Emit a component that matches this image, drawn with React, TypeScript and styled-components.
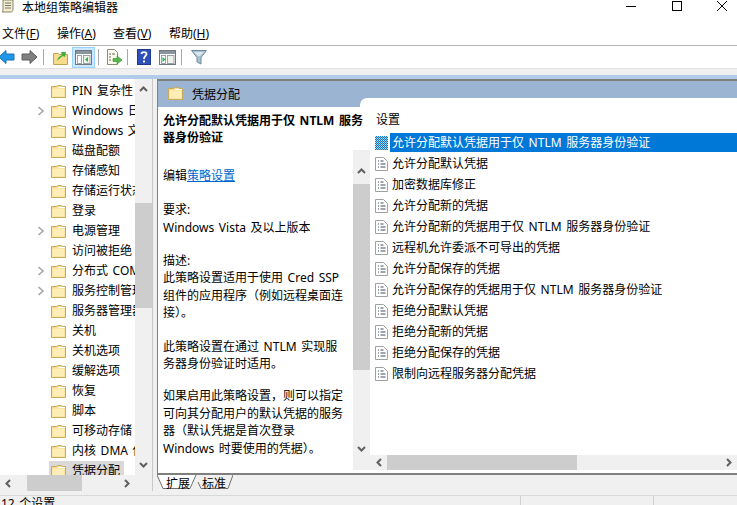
import React from 'react';
import styled, { createGlobalStyle } from 'styled-components';

const Global = createGlobalStyle`
  html, body { margin: 0; padding: 0; background: #fff; overflow: hidden; }
  body { font-family: "Noto Sans", "Noto Sans CJK SC", "Liberation Sans", sans-serif; font-size: 12px; color: #000; word-spacing: 1.5px; }
`;

const Window = styled.div`
  width: 737px; height: 505px; display: flex; flex-direction: column; overflow: hidden; background: #fff;
`;
const TitleBar = styled.div`
  height: 23px; flex: none; display: flex; align-items: flex-start;
`;
const TitleIcon = styled.svg`
  width: 16px; height: 14px; flex: none;
`;
const TitleText = styled.div`
  margin-left: 6px; line-height: 15px; white-space: nowrap; flex: 1;
`;
const WinControls = styled.div`
  display: flex; width: 103px; margin-right: 9px; justify-content: space-between; flex: none;
`;
const MenuBar = styled.div`
  height: 22px; flex: none; display: flex; align-items: center; padding-left: 2px; border-bottom: 1px solid #b4b4b4;
`;
const MenuItem = styled.div`
  width: 38px; margin-right: 18px; white-space: nowrap; line-height: 20px;
  &:first-child { margin-right: 17px; }
  u { text-underline-offset: 1px; }
`;
const Toolbar = styled.div`
  height: 22px; flex: none; display: flex; align-items: center; border-bottom: 1px solid #e0e0e0;
`;
const ToolIcon = styled.svg<{ $l: number; $w?: number }>`
  flex: none; width: ${p => p.$w ?? 16}px; height: 16px; margin-left: ${p => p.$l}px;
`;
const ToolSlot = styled.div<{ $l: number }>`
  flex: none; width: 17px; height: 15px; margin-left: ${p => p.$l}px; display: flex;
`;
const ToolSep = styled.div<{ $l: number }>`
  flex: none; width: 1px; height: 16px; background: #a8a8a8; margin-left: ${p => p.$l}px;
`;
const ActiveTool = styled.div`
  flex: none; box-sizing: border-box; width: 23px; height: 21px; margin-left: 4px; background: #cce8ff; border: 1px solid #99d1ff;
  display: flex; align-items: center; justify-content: center;
`;
const Band = styled.div`
  height: 6px; flex: none; background: #f0f0f0;
`;
const BlueStrip = styled.div`
  height: 4px; flex: none; background: #b1cce8;
`;
const Workspace = styled.div`
  height: 416px; flex: none; display: flex; background: #f0f0f0;
`;
const TreePane = styled.div`
  width: 152px; height: 412px; flex: none; display: flex; flex-direction: column; border-right: 1px solid #c8c8c8;
`;
const TreeBody = styled.div`
  height: 396px; flex: none; display: flex;
`;
const TreeList = styled.div`
  box-sizing: border-box; width: 135px; height: 396px; padding-top: 2px; flex: none; background: #fff; overflow: hidden;
`;
const TreeRow = styled.div`
  height: 20px; display: flex; align-items: center; white-space: nowrap;
`;
const Expander = styled.svg`
  width: 8px; height: 10px; margin-left: 37px; flex: none;
`;
const ExpanderGap = styled.div`
  width: 8px; margin-left: 37px; flex: none;
`;
const TreeItem = styled.div<{ $sel?: boolean }>`
  margin-left: 4px; padding: 0 4px 0 2px; height: 20px; display: flex; align-items: center; flex: none;
  background: ${p => p.$sel ? '#d9d9d9' : 'transparent'};
`;
const Folder = styled.svg`
  width: 15px; height: 14px; flex: none;
`;
const TreeLabel = styled.span`
  margin-left: 6px; line-height: 20px;
`;
const VScroll = styled.div`
  width: 17px; flex: none; background: #f0f0f0; display: flex; flex-direction: column; align-items: center;
`;
const ArrowBox = styled.div<{ $inset?: number; $end?: boolean }>`
  height: 20px; width: 17px; flex: none; display: flex; align-items: center; justify-content: center;
  margin-${p => p.$end ? 'bottom' : 'top'}: ${p => p.$inset ?? 0}px;
`;
const VThumb = styled.div<{ $top: number; $h: number }>`
  width: 17px; height: ${p => p.$h}px; margin-top: ${p => p.$top}px; background: #cdcdcd; flex: none;
`;
const Filler = styled.div`
  flex: 1;
`;
const HScroll = styled.div<{ $h: number; $w?: number }>`
  height: ${p => p.$h}px; flex: none; display: flex; align-items: stretch; background: #f0f0f0;
  ${p => p.$w ? `width: ${p.$w}px;` : ''}
`;
const HArrow = styled.div<{ $w: number }>`
  width: ${p => p.$w}px; flex: none; display: flex; align-items: center; justify-content: center;
`;
const HThumb = styled.div<{ $w: number; $l?: number }>`
  width: ${p => p.$w}px; margin-left: ${p => p.$l ?? 0}px; flex: none; background: #cdcdcd;
`;
const DetailArea = styled.div`
  margin-left: 4px; flex: 1; min-width: 0; display: flex; flex-direction: column;
`;
const Panel = styled.div`
  height: 394px; flex: none; display: flex; flex-direction: column; border-bottom: 2px solid #7f7f7f; background: #fff;
`;
const PanelTop = styled.div`
  height: 2px; flex: none; background: #7f7f7f;
`;
const Columns = styled.div`
  flex: 1; min-height: 0; display: flex; border-left: 1px solid #808080;
`;
const DescColumn = styled.div`
  width: 202px; flex: none; display: flex; flex-direction: column; position: relative; background: #fff;
`;
const DescHeader = styled.div`
  height: 26px; flex: none; background: #9ab4d2; display: flex; align-items: center; padding-left: 10px;
`;
const HeaderFolder = styled.svg`
  width: 15px; height: 14px; flex: none; margin-bottom: 2px;
`;
const HeaderTitle = styled.span`
  margin-left: 9px;
`;
const DescBody = styled.div`
  padding: 5px 0 0 5px; white-space: nowrap; position: relative; z-index: 2;
`;
const Para = styled.div<{ $gap?: number; $bold?: boolean }>`
  line-height: 17.4px; margin-top: ${p => p.$gap ?? 0}px; font-weight: ${p => p.$bold ? 700 : 400};
  a { color: #0066cc; text-decoration: underline; }
`;
const DescScroll = styled.div`
  position: absolute; left: 195px; top: 69px; width: 17px; height: 320px; background: #f0f0f0; z-index: 3;
  display: flex; flex-direction: column;
`;
const ListColumn = styled.div`
  flex: 1; min-width: 0; display: flex; flex-direction: column; background: #9ab4d2; padding-top: 17px;
`;
const ListPanel = styled.div`
  flex: 1; min-height: 0; background: #fff; border-top-left-radius: 7px; display: flex; flex-direction: column;
`;
const ListHead = styled.div`
  box-sizing: border-box; height: 26px; margin-top: 8px; padding: 6px 0 0 16px; line-height: 15px; flex: none;
`;
const ListBody = styled.div`
  flex: 1; min-height: 0; padding-left: 15px; display: flex; flex-direction: column;
`;
const ListRow = styled.div`
  height: 21px; flex: none; display: flex; align-items: center; white-space: nowrap;
`;
const DocIcon = styled.svg`
  width: 13px; height: 14px; flex: none;
`;
const RowLabel = styled.span<{ $sel?: boolean }>`
  margin-left: 2px; padding-left: 2px; flex: 1; line-height: 19px;
  background: ${p => p.$sel ? '#0078d7' : 'transparent'}; color: ${p => p.$sel ? '#fff' : '#000'};
`;
const ListScrollWrap = styled.div`
  margin-left: 10px;
`;
const ListEnd = styled.div`
  height: 3px; flex: none; background: #fff;
`;
const TabStrip = styled.div`
  height: 20px; flex: none; display: flex;
`;
const Tab = styled.div<{ $w: number; $l: number }>`
  width: ${p => p.$w}px; margin-left: ${p => p.$l}px; flex: none; position: relative; height: 15px; display: flex; align-items: center; justify-content: center;
  svg { position: absolute; left: 0; top: 0; }
  span { position: relative; }
`;
const StatusBar = styled.div`
  height: 10px; flex: none; background: #f0f0f0; display: flex; overflow: hidden; border-top: 1px solid #d9d9d9; box-sizing: border-box;
`;
const StatusCell = styled.div<{ $w: number; $last?: boolean }>`
  width: ${p => p.$w}px; flex: ${p => p.$last ? 1 : 'none'}; box-sizing: border-box;
  border-right: ${p => p.$last ? 'none' : '1px solid #d0d0d0'}; line-height: 15px; padding-left: 1px; white-space: nowrap;
`;

const FolderGlyph = () => (
  <>
    <path d="M.5 2.5 h5 l1-1 h4 l1 1 h3 v11 h-14z" fill="#f7dc8e" stroke="#c9a95c" />
    <path d="M1.5 4.5 h12 v8 h-12z" fill="#fdeeb8" />
    <path d="M7 3.5 h7" stroke="#fff" />
  </>
);

const Up = () => (
  <svg width="9" height="6" viewBox="0 0 9 6"><path d="M1 5 L4.5 1.5 L8 5" fill="none" stroke="#606060" strokeWidth="2" /></svg>
);
const Down = () => (
  <svg width="9" height="6" viewBox="0 0 9 6"><path d="M1 1 L4.5 4.5 L8 1" fill="none" stroke="#606060" strokeWidth="2" /></svg>
);
const Left = () => (
  <svg width="6" height="9" viewBox="0 0 6 9"><path d="M5 1 L1.5 4.5 L5 8" fill="none" stroke="#606060" strokeWidth="2" /></svg>
);
const Right = () => (
  <svg width="6" height="9" viewBox="0 0 6 9"><path d="M1 1 L4.5 4.5 L1 8" fill="none" stroke="#606060" strokeWidth="2" /></svg>
);

const PanelGlyph = ({ green = 'left' }: { green?: 'left' | 'right' }) => (
  <svg width="17" height="15" viewBox="0 0 17 15">
    <rect x=".5" y=".5" width="16" height="14" fill="#fff" stroke="#6f7880" />
    <rect x="1" y="1" width="15" height="3" fill="#8a949c" />
    <rect x="2.5" y="5.5" width="4" height="8" fill="#fff" stroke="#9aa2a8" />
    <rect x="8.5" y="5.5" width="6.5" height="8" fill="#eef1e8" stroke="#9aa2a8" />
    {green === 'left'
      ? <path d="M13 7 v5 l-3-2.5z" fill="#2fae4f" />
      : <path d="M3.5 7 v5 l3-2.5z" fill="#2fae4f" />}
  </svg>
);

const tree: [string, boolean][] = [
  ['PIN 复杂性', false], ['Windows 日志', true], ['Windows 文件', false], ['磁盘配额', false], ['存储感知', false],
  ['存储运行状态', false], ['登录', false], ['电源管理', true], ['访问被拒绝', false], ['分布式 COM', true],
  ['服务控制管理', true], ['服务器管理器', false], ['关机', false], ['关机选项', false], ['缓解选项', false],
  ['恢复', false], ['脚本', false], ['可移动存储', false], ['内核 DMA 保护', false], ['凭据分配', false],
];

const settings = [
  '允许分配默认凭据用于仅 NTLM 服务器身份验证', '允许分配默认凭据', '加密数据库修正', '允许分配新的凭据',
  '允许分配新的凭据用于仅 NTLM 服务器身份验证', '远程机允许委派不可导出的凭据', '允许分配保存的凭据',
  '允许分配保存的凭据用于仅 NTLM 服务器身份验证', '拒绝分配默认凭据', '拒绝分配新的凭据', '拒绝分配保存的凭据', '限制向远程服务器分配凭据',
];

function DitherDefs() {
  return (
    <svg width="0" height="0" style={{ position: 'absolute' }}>
      <defs>
        <pattern id="dither" width="2" height="2" patternUnits="userSpaceOnUse">
          <rect width="2" height="2" fill="#0078d7" />
          <rect width="1" height="1" fill="#dfe8f0" />
          <rect x="1" y="1" width="1" height="1" fill="#8fb8dc" />
        </pattern>
      </defs>
    </svg>
  );
}

export default function App() {
  return (
    <Window>
      <Global />
      <TitleBar>
        <TitleIcon viewBox="0 0 16 14">
          <path d="M3 0 h10 v9 c0 2-1 3-2 3 H2 c1-1 1-2 1-3z" fill="#f3edcf" stroke="#8a8468" />
          <path d="M5 3 h6 M5 5.5 h6 M5 8 h6" stroke="#77736a" />
        </TitleIcon>
        <TitleText>本地组策略编辑器</TitleText>
        <WinControls>
          <svg width="12" height="12" viewBox="0 0 12 12"><path d="M1 6.5 h10" stroke="#000" /></svg>
          <svg width="12" height="12" viewBox="0 0 12 12"><rect x="1.5" y="1.5" width="9" height="9" fill="none" stroke="#000" /></svg>
          <svg width="12" height="12" viewBox="0 0 12 12"><path d="M1 1 L11 11 M11 1 L1 11" stroke="#000" /></svg>
        </WinControls>
      </TitleBar>
      <MenuBar>
        <MenuItem>文件(<u>F</u>)</MenuItem>
        <MenuItem>操作(<u>A</u>)</MenuItem>
        <MenuItem>查看(<u>V</u>)</MenuItem>
        <MenuItem>帮助(<u>H</u>)</MenuItem>
      </MenuBar>
      <Toolbar>
        <ToolIcon $l={0} viewBox="0 0 16 16">
          <path d="M-1 8 L6 1.5 V5 H14 V11 H6 V14.5z" fill="#1f97e8" stroke="#1b6fb5" />
        </ToolIcon>
        <ToolIcon $l={5} viewBox="0 0 16 16">
          <path d="M16 8 L9 1.5 V5 H1 V11 H9 V14.5z" fill="#808080" stroke="#5c5c5c" />
        </ToolIcon>
        <ToolSep $l={6} />
        <ToolIcon $l={9} $w={15} viewBox="0 0 15 16">
          <path d="M.5 4.5 h5 l1 1 h8 v10 h-14z" fill="#f7dc8e" stroke="#c2a050" />
          <path d="M4 12 C5 8 7 7 9 6 L8 3 L13 3 L12 8 L10 7 C8 8 6 10 4 12z" fill="#3fae3f" />
        </ToolIcon>
        <ActiveTool><PanelGlyph /></ActiveTool>
        <ToolSep $l={3} />
        <ToolIcon $l={7} viewBox="0 0 16 16">
          <path d="M1.5 .5 h7 l3 3 v12 h-10z" fill="#fdfbee" stroke="#8c8c78" />
          <path d="M3 5 h2 M3 8 h2 M3 11 h2 M6 5 h3" stroke="#66665a" />
          <path d="M7 9.5 h4 v-2.5 l5 4 -5 4 v-2.5 h-4z" fill="#58b947" stroke="#2f8f2f" strokeWidth=".6" />
        </ToolIcon>
        <ToolSep $l={5} />
        <ToolIcon $l={9} $w={14} viewBox="0 0 14 16">
          <rect x=".5" y=".5" width="13" height="15" fill="#2f50b8" stroke="#1d3a8c" />
          <path d="M4.5 5 C4.5 2.5 9.5 2.5 9.5 5 C9.5 7 7 7 7 10" fill="none" stroke="#fff" strokeWidth="1.8" />
          <rect x="6" y="11.5" width="2" height="2" fill="#fff" />
        </ToolIcon>
        <ToolSlot $l={8}><PanelGlyph green="right" /></ToolSlot>
        <ToolSep $l={5} />
        <ToolIcon $l={9} $w={16} viewBox="0 0 16 16">
          <path d="M.5 1.5 h15 L10 8.5 V15 L6 13 V8.5z" fill="#a9c2d4" stroke="#6f8a9c" />
          <path d="M3 3 h10 L9 7 H7z" fill="#d9e6ee" />
        </ToolIcon>
      </Toolbar>
      <Band />
      <BlueStrip />
      <Workspace>
        <TreePane>
          <TreeBody>
            <TreeList>
              {tree.map(([t, exp], i) => (
                <TreeRow key={t}>
                  {exp
                    ? <Expander viewBox="0 0 8 10"><path d="M1.5 1 L6 5 L1.5 9" fill="none" stroke="#a6a6a6" strokeWidth="1.6" /></Expander>
                    : <ExpanderGap />}
                  <TreeItem $sel={i === tree.length - 1}>
                    <Folder viewBox="0 0 15 14"><FolderGlyph /></Folder>
                    <TreeLabel>{t}</TreeLabel>
                  </TreeItem>
                </TreeRow>
              ))}
            </TreeList>
            <VScroll>
              <ArrowBox><Up /></ArrowBox>
              <VThumb $top={104} $h={105} />
              <Filler />
              <ArrowBox><Down /></ArrowBox>
            </VScroll>
          </TreeBody>
          <HScroll $h={16} $w={135}>
            <HArrow $w={15}><Left /></HArrow>
            <HThumb $w={55} $l={12} />
            <Filler />
            <HArrow $w={17}><Right /></HArrow>
          </HScroll>
        </TreePane>
        <DetailArea>
          <Panel>
            <PanelTop />
            <Columns>
              <DescColumn>
                <DescHeader>
                  <HeaderFolder viewBox="0 0 15 14"><FolderGlyph /></HeaderFolder>
                  <HeaderTitle>凭据分配</HeaderTitle>
                </DescHeader>
                <DescBody>
                  <Para $bold>允许分配默认凭据用于仅 NTLM 服务<br />器身份验证</Para>
                  <Para $gap={20}>编辑<a href="#">策略设置</a></Para>
                  <Para $gap={17}>要求:<br />Windows Vista 及以上版本</Para>
                  <Para $gap={16}>描述:<br />此策略设置适用于使用 Cred SSP<br />组件的应用程序（例如远程桌面连<br />接）。</Para>
                  <Para $gap={16}>此策略设置在通过 NTLM 实现服<br />务器身份验证时适用。</Para>
                  <Para $gap={15}>如果启用此策略设置，则可以指定<br />可向其分配用户的默认凭据的服务<br />器（默认凭据是首次登录<br />Windows 时要使用的凭据）。</Para>
                </DescBody>
                <DescScroll>
                  <ArrowBox $inset={11}><Up /></ArrowBox>
                  <VThumb $top={3} $h={186} />
                  <Filler />
                  <ArrowBox $inset={11} $end><Down /></ArrowBox>
                </DescScroll>
              </DescColumn>
              <ListColumn>
                <ListPanel>
                  <ListHead>设置</ListHead>
                  <ListBody>
                    <DitherDefs />
                    {settings.map((s, i) => (
                      <ListRow key={s}>
                        <DocIcon viewBox="0 0 13 14">
                          {i === 0
                            ? <rect width="13" height="14" fill="url(#dither)" />
                            : <>
                                <path d="M.5 .5 h8 l4 4 v9 h-12z" fill="#fff" stroke="#a0a0a0" />
                                <path d="M3 4 h1 M3 7 h1 M3 10 h1 M5.5 4 h3 M5.5 7 h5 M5.5 10 h5" stroke="#3c4a5a" />
                              </>}
                        </DocIcon>
                        <RowLabel $sel={i === 0}>{s}</RowLabel>
                      </ListRow>
                    ))}
                  </ListBody>
                  <ListScrollWrap>
                    <HScroll $h={15}>
                      <HArrow $w={17}><Left /></HArrow>
                      <HThumb $w={190} />
                      <Filler />
                      <HArrow $w={17}><Right /></HArrow>
                    </HScroll>
                  </ListScrollWrap>
                  <ListEnd />
                </ListPanel>
              </ListColumn>
            </Columns>
          </Panel>
          <TabStrip>
            <Tab $w={42} $l={0}>
              <svg width="42" height="15" viewBox="0 0 42 15">
                <path d="M0 0 L6 13.5 H33 L39 0 Z" fill="#fff" stroke="none" />
                <path d="M0 0 L6 13.5 H33 L39 0" fill="none" stroke="#707070" />
              </svg>
              <span>扩展</span>
            </Tab>
            <Tab $w={38} $l={-4}>
              <svg width="38" height="15" viewBox="0 0 38 15">
                <path d="M3 7 L6 13.5 H33 L38 0" fill="none" stroke="#707070" />
              </svg>
              <span>标准</span>
            </Tab>
          </TabStrip>
        </DetailArea>
      </Workspace>
      <StatusBar>
        <StatusCell $w={521}>12 个设置</StatusCell>
        <StatusCell $w={133} />
        <StatusCell $w={83} $last />
      </StatusBar>
    </Window>
  );
}
